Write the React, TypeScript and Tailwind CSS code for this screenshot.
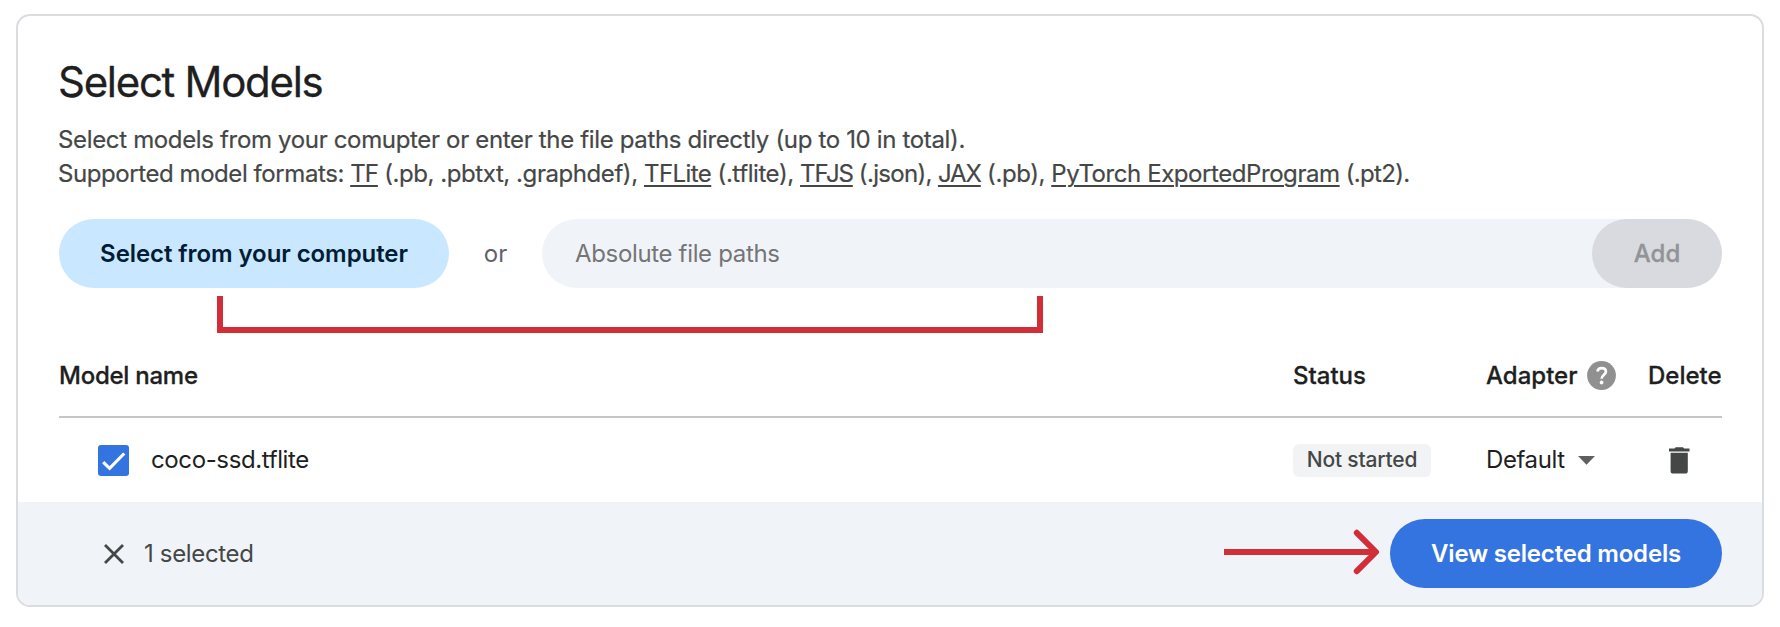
import type { ReactNode } from 'react';

const Link = ({ children, className }: { children: ReactNode; className: string }) => (
  <a className={`underline decoration-2 underline-offset-[3px] [text-decoration-skip-ink:auto] ${className}`}>{children}</a>
);

const HelpIcon = () => (
  <svg className="ml-[10px] size-[29px]" viewBox="-14.5 -14.5 29 29" fill="none">
    <circle r="14.4" fill="#909090" />
    <path d="M-4.1-4C-3.6-6.2-2-7.4.2-7.4c2.5 0 4.2 1.5 4.2 3.6C4.4-1 .1-.4.1 3.3" stroke="#fff" strokeWidth="2.7" />
    <circle cx="0.1" cy="7" r="1.9" fill="#fff" />
  </svg>
);

const TrashIcon = () => (
  <svg className="h-[27px] w-[21px]" viewBox="0 0 21 27" fill="#444746">
    <path d="M6.7.3h7.2l1.2 1.2h5.4v3H0v-3h5.5z" />
    <path d="M1.6 5.7h17.2v18.2a2.7 2.7 0 0 1-2.7 2.7H4.3a2.7 2.7 0 0 1-2.7-2.7z" />
  </svg>
);

export default function App() {
  return (
    <div className="relative h-[627px] w-[1780px] bg-white px-4 pt-[14px] font-['Inter',sans-serif] text-[24px] whitespace-nowrap text-[#1f1f1f]">
      <div className="flex h-[593px] flex-col overflow-hidden rounded-[14px] border-2 border-[#dadce0]">
        <div className="pr-[40px] pl-[41px]">
          <h1 className="mt-[39px] -ml-px h-[54px] text-[42px] leading-[54px] tracking-[-1.3px] [-webkit-text-stroke:0.3px]">Select Models</h1>
          <div className="mt-[14px] -ml-px leading-[34px] text-[#444746] [-webkit-text-stroke:0.2px]">
            <p className="tracking-[-0.34px]">Select models from your comupter or enter the file paths directly (up to 10 in total).</p>
            <p className="tracking-[-0.43px]">
              Supported model formats: <Link className="tracking-[-1px]">TF</Link> (.pb, .pbtxt, .graphdef),{' '}
              <Link className="tracking-[-0.57px]">TFLite</Link> (.tflite),{' '}
              <Link className="tracking-[-1.1px]">TFJS</Link>
              <span className="tracking-[-0.68px]"> (.json), </span>
              <Link className="tracking-[-1.1px]">JAX</Link> (.pb),{' '}
              <Link className="tracking-[-0.43px]">PyTorch ExportedProgram</Link>
              <span className="tracking-[-0.68px]"> (.pt2).</span>
            </p>
          </div>
          <div className="mt-[28px] flex h-[69px] items-center">
            <button className="h-full w-[390px] rounded-full bg-[#c9e7ff] font-semibold tracking-[-0.08px] text-[#001d35]">Select from your computer</button>
            <span className="w-[93px] text-center text-[#5f6368]">or</span>
            <div className="flex h-full flex-1 items-center rounded-full bg-[#f0f4f9]">
              <span className="flex-1 pl-[33px] tracking-[-0.34px] text-[#757575]">Absolute file paths</span>
              <button className="h-full w-[130px] rounded-full bg-[#d8dadf] font-medium text-[#929396] [-webkit-text-stroke:0.3px]">Add</button>
            </div>
          </div>
          <div className="mt-[47px] flex h-[83px] items-center border-b-2 border-[#c4c7c5] font-medium [-webkit-text-stroke:0.3px]">
            <span className="w-[1234px] tracking-[-0.25px]">Model name</span>
            <span className="w-[193px]">Status</span>
            <span className="flex w-[162px] items-center">Adapter<HelpIcon /></span>
            <span>Delete</span>
          </div>
          <div className="flex h-[84px] items-center">
            <svg className="ml-[39px] size-[31px]" viewBox="0 0 31 31" fill="none">
              <rect width="31" height="31" rx="3" fill="#3474e0" />
              <path d="m5.2 17.2 6.4 6.1L26.2 8.5" stroke="#fff" strokeWidth="3.2" />
            </svg>
            <span className="ml-[22px] w-[1142px] tracking-[-0.38px]">coco-ssd.tflite</span>
            <div className="w-[193px]">
              <span className="flex h-[33px] w-[138px] items-center justify-center rounded-[6px] bg-[#f1f3f4] text-[21px] font-medium tracking-[-0.2px] text-[#444746]">Not started</span>
            </div>
            <span className="w-[92px] tracking-[-0.4px]">Default</span>
            <svg className="h-[9px] w-[17px]" viewBox="0 0 17 9" fill="#5f6060">
              <path d="M0 0h17L8.5 8.7z" />
            </svg>
            <div className="ml-[74px] flex"><TrashIcon /></div>
          </div>
        </div>
        <div className="flex flex-1 items-center bg-[#f0f4f9] pr-[40px] pl-[86px]">
          <svg className="size-[20px]" viewBox="0 0 20 20" fill="none" stroke="#444746" strokeWidth="2.8">
            <path d="m1 1 18 18M19 1 1 19" />
          </svg>
          <span className="ml-[20px] flex-1 tracking-[-0.35px] text-[#444746]">1 selected</span>
          <button className="h-[69px] w-[332px] rounded-full bg-[#3474e0] font-semibold tracking-[-0.2px] text-white">View selected models</button>
        </div>
      </div>
      <div className="absolute top-[296px] left-[217px] h-[37px] w-[826px] border-6 border-t-0 border-[#d22e38]" />
      <svg className="absolute top-[529px] left-[1224px] h-[46px] w-[156px]" viewBox="0 0 156 46" fill="none" stroke="#d22e38" strokeWidth="6">
        <path d="M0 23h151" />
        <path d="m132.8 3.8 19.2 19.2-19.2 19.2" strokeLinecap="round" strokeLinejoin="round" />
      </svg>
    </div>
  );
}
